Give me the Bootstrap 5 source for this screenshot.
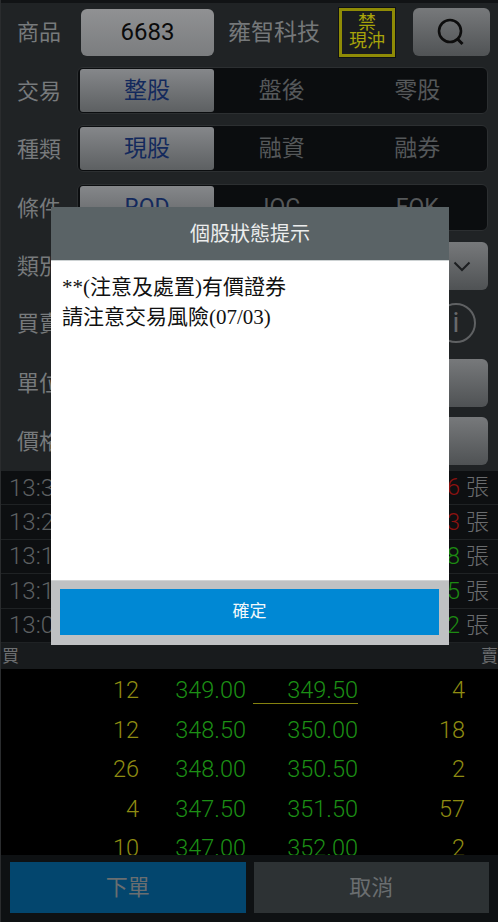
<!DOCTYPE html>
<html lang="zh-Hant">
<head>
<meta charset="utf-8">
<meta name="viewport" content="width=device-width, initial-scale=1">
<link href="https://cdn.jsdelivr.net/npm/bootstrap@5.3.0/dist/css/bootstrap.min.css" rel="stylesheet">
<style>
html,body{margin:0;height:922px;overflow:hidden;background:#0d0f11}
body{font-family:Roboto,"Noto Sans CJK TC",sans-serif;color:#6c6e70}
.app-shell{width:498px;height:922px;position:relative;display:flex;flex-direction:column;overflow:hidden;border-left:1px solid #2a2c2e}
.form-zone{height:471px;background:#202325;border-top:3px solid #111315;padding:5px 10px 0 15px;display:flex;flex-direction:column;flex:none}
.form-row{display:flex;align-items:center;gap:11px}
.r1{height:48px;margin-bottom:11px}.r2{height:47px;margin-bottom:11px}.r3{height:47px;margin-bottom:12px}.r4{height:47px;margin-bottom:11px}.r5{height:48px;margin-bottom:10px}.r6{height:46px;margin-bottom:13px}.r7{height:48px;margin-bottom:10px}.r8{height:48px}
.lab{width:52px;flex:none;font-size:22px;line-height:1;color:#777a7c;white-space:nowrap;margin-left:1px;margin-right:-1px;padding-top:2px}
.field{background:linear-gradient(#909193,#7b7d7f);color:#0b0b0b;border-radius:6px;height:47px;width:133px;flex:none;margin-left:2px;display:flex;align-items:center;justify-content:center;font-size:24px}
.stock{width:92px;flex:none;font-size:23px;line-height:1;color:#75787a;margin-left:3px;white-space:nowrap;text-align:center}
.flag{width:56px;height:49px;flex:none;border:3px solid #8f8b06;outline:1px solid #101214;background:#1a1c1e;color:#a8a40a;font-size:18px;line-height:18px;text-align:center;padding-top:3px;margin-left:8px}
.flag span{display:block}
.btn-mag{width:77px;height:48px;flex:none;margin-left:7px;border-radius:6px;background:linear-gradient(#77797b,#505355);display:flex;align-items:center;justify-content:center}
.seg{flex:1;height:47px;background:#0b0d0f;border-radius:6px;border:1px solid #2c2f31;display:flex;padding:1px 2px;font-size:23px;color:#55585a;margin-left:-2px}
.seg>div{flex:1;display:flex;align-items:center;justify-content:center;padding-top:1px}
.seg>div.on{flex:none;width:134px;border-radius:3px;background:linear-gradient(#85878a,#5d6062);color:#13295c}
.wide{flex:1;height:100%;margin-left:-2px;border-radius:6px;background:linear-gradient(#77797b,#4f5254);display:flex;justify-content:flex-end;align-items:center;padding-right:17px}
.info-wrap{flex:1;display:flex;justify-content:flex-end;padding-right:12px}
.info{width:40px;height:40px;border:2px solid #5f6163;border-radius:50%;display:flex;align-items:center;justify-content:center;color:#68696b;font-size:28px}
.ticks{height:172px;flex:none;background:#0d0f11}
.tick{height:34.4px;display:flex;justify-content:space-between;align-items:center;border-bottom:1px solid #1f2224;padding:0 9px 0 8px;font-size:24px;font-weight:300;color:#5d6062}
.tick b{font-weight:300}.tick .up{color:#8c1210}.tick .dn{color:#1d8a12}
.tick .unit{color:#6a6c6e;margin-left:6px;font-size:23px}
.book-head{height:26px;flex:none;background:#181b1d;display:flex;justify-content:space-between;font-size:17px;line-height:27px;color:#6d6f71;padding:0 0 0 1px}
.book{height:186px;flex:none;background:#000;overflow:hidden;padding-top:2px}
.brow{display:grid;grid-template-columns:138px 107px 112px 107px;height:39.6px;font-size:23.5px;font-weight:300;align-items:center;text-align:right;line-height:1}
.brow .q{color:#8f8c12}.brow .p{color:#1c8f15}
.brow .best{position:relative}
.best-line{position:absolute;right:0;top:24px;height:1px;background:#85820f;width:105px}
.foot{flex:1;background:#0e1113;display:flex;gap:8px;padding:7px 9px 9px 9px}
.foot>div{flex:1;display:flex;align-items:center;justify-content:center;font-size:22px;color:#6a6e70;height:51px}
.go{background:#03466e}.no{background:#2d3234}
.dlg{position:absolute;left:50px;top:207px;width:398px;height:438px;display:flex;flex-direction:column;background:#fff}
.dlg-head{height:54px;background:#5a6366;color:#eceded;font-size:20px;display:flex;align-items:center;justify-content:center;flex:none;border-bottom:1px solid #cdd2d3}
.dlg-body{flex:1;padding:11px 11px;font-family:"Liberation Serif","Noto Sans CJK TC",serif;font-size:21px;line-height:30px;color:#111}
.dlg-foot{height:65px;flex:none;background:#bfc1c3;padding:8px 10px 9px 9px;border-top:1px solid #d2d4d5}
.dlg-ok{display:flex;height:46px;width:100%;background:#0088d4;color:#f3f8fb;font-size:17px;align-items:center;justify-content:center;border:0;border-radius:0;padding:0}
</style>
</head>
<body>
<div class="app-shell">
  <div class="form-zone">
    <div class="form-row r1">
      <div class="lab">商品</div>
      <div class="field">6683</div>
      <div class="stock">雍智科技</div>
      <div class="flag"><span>禁</span><span>現沖</span></div>
      <div class="btn-mag"><svg width="30" height="30" viewBox="0 0 30 30" fill="none" stroke="#0d0d0d"><circle cx="13" cy="14" r="11" stroke-width="2.6"/><path d="M20.5 22l5 5" stroke-width="3"/></svg></div>
    </div>
    <div class="form-row r2"><div class="lab">交易</div><div class="seg"><div class="on">整股</div><div>盤後</div><div>零股</div></div></div>
    <div class="form-row r3"><div class="lab">種類</div><div class="seg"><div class="on">現股</div><div>融資</div><div>融券</div></div></div>
    <div class="form-row r4"><div class="lab">條件</div><div class="seg"><div class="on">ROD</div><div>IOC</div><div>FOK</div></div></div>
    <div class="form-row r5"><div class="lab">類別</div><div class="wide"><svg width="18" height="11" viewBox="0 0 18 11" fill="none" stroke="#1c1e20" stroke-width="2"><path d="M1.5 1.5L9 9l7.5-7.5"/></svg></div></div>
    <div class="form-row r6"><div class="lab">買賣</div><div class="info-wrap"><div class="info">i</div></div></div>
    <div class="form-row r7"><div class="lab">單位</div><div class="wide"></div></div>
    <div class="form-row r8"><div class="lab">價格</div><div class="wide"></div></div>
  </div>
  <div class="ticks">
    <div class="tick"><span>13:30</span><span><b class="up">6</b><span class="unit">張</span></span></div>
    <div class="tick"><span>13:20</span><span><b class="up">3</b><span class="unit">張</span></span></div>
    <div class="tick"><span>13:15</span><span><b class="dn">8</b><span class="unit">張</span></span></div>
    <div class="tick"><span>13:10</span><span><b class="dn">5</b><span class="unit">張</span></span></div>
    <div class="tick"><span>13:05</span><span><b class="dn">2</b><span class="unit">張</span></span></div>
  </div>
  <div class="book-head"><span>買</span><span>賣</span></div>
  <div class="book">
    <div class="brow"><span class="q">12</span><span class="p">349.00</span><span class="p best">349.50<i class="best-line"></i></span><span class="q">4</span></div>
    <div class="brow"><span class="q">12</span><span class="p">348.50</span><span class="p">350.00</span><span class="q">18</span></div>
    <div class="brow"><span class="q">26</span><span class="p">348.00</span><span class="p">350.50</span><span class="q">2</span></div>
    <div class="brow"><span class="q">4</span><span class="p">347.50</span><span class="p">351.50</span><span class="q">57</span></div>
    <div class="brow"><span class="q">10</span><span class="p">347.00</span><span class="p">352.00</span><span class="q">2</span></div>
  </div>
  <div class="foot"><div class="go">下單</div><div class="no">取消</div></div>
  <div class="dlg">
    <div class="dlg-head">個股狀態提示</div>
    <div class="dlg-body">**(注意及處置)有價證券<br>請注意交易風險(07/03)</div>
    <div class="dlg-foot"><button type="button" class="btn dlg-ok">確定</button></div>
  </div>
</div>
<script src="https://cdn.jsdelivr.net/npm/bootstrap@5.3.0/dist/js/bootstrap.bundle.min.js"></script>
</body>
</html>
